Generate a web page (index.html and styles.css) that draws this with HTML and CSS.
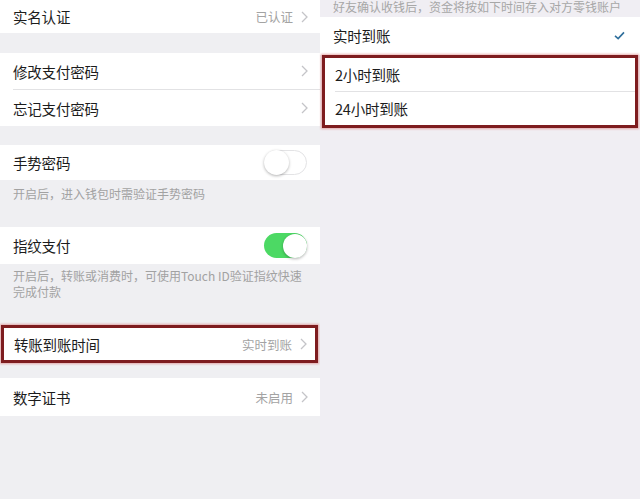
FILE: index.html
```html
<!DOCTYPE html>
<html lang="zh">
<head>
<meta charset="utf-8">
<link rel="stylesheet" href="styles.css">
</head>
<body>
<div class="screen">
  <div class="panel left">
    <div class="row h33">
      <span class="label">实名认证</span>
      <span class="value">已认证<svg class="chev" viewBox="0 0 7 12"><polyline points="1,1 6,6 1,11"/></svg></span>
    </div>
    <div class="gap g20"></div>
    <div class="group">
      <div class="row h36"><span class="label">修改支付密码</span><span class="value"><svg class="chev" viewBox="0 0 7 12"><polyline points="1,1 6,6 1,11"/></svg></span></div>
      <div class="divider"></div>
      <div class="row h36"><span class="label">忘记支付密码</span><span class="value"><svg class="chev" viewBox="0 0 7 12"><polyline points="1,1 6,6 1,11"/></svg></span></div>
    </div>
    <div class="gap g19"></div>
    <div class="row h35">
      <span class="label">手势密码</span>
      <span class="toggle off"><span class="knob"></span></span>
    </div>
    <div class="caption c1">开启后，进入钱包时需验证手势密码</div>
    <div class="row h37">
      <span class="label">指纹支付</span>
      <span class="toggle on"><span class="knob"></span></span>
    </div>
    <div class="caption c2"><div class="cl">开启后，转账或消费时，可使用Touch ID验证指纹快速</div><div class="cl">完成付款</div></div>
    <div class="highlight hl-left">
      <div class="row h32">
        <span class="label">转账到账时间</span>
        <span class="value">实时到账<svg class="chev" viewBox="0 0 7 12"><polyline points="1,1 6,6 1,11"/></svg></span>
      </div>
    </div>
    <div class="gap g15"></div>
    <div class="row h38">
      <span class="label">数字证书</span>
      <span class="value">未启用<svg class="chev" viewBox="0 0 7 12"><polyline points="1,1 6,6 1,11"/></svg></span>
    </div>
  </div>
  <div class="panel right">
    <div class="caption top">好友确认收钱后，资金将按如下时间存入对方零钱账户</div>
    <div class="row r-first">
      <span class="label">实时到账</span>
      <svg class="check" viewBox="0 0 12 10"><polyline points="1,5.5 4.5,8.5 11,1.5"/></svg>
    </div>
    <div class="spacer2"></div>
    <div class="highlight hl-right">
      <div class="row h33r"><span class="label">2小时到账</span></div>
      <div class="divider"></div>
      <div class="row h33r"><span class="label">24小时到账</span></div>
    </div>
  </div>
</div>
</body>
</html>
```
FILE: styles.css
```css
* { box-sizing: border-box; }
html, body { margin: 0; padding: 0; }
body {
  width: 640px;
  height: 499px;
  overflow: hidden;
  font-family: "Noto Sans CJK SC", "Noto Sans", sans-serif;
  background: #efeff3;
}
.screen {
  display: flex;
  width: 640px;
  height: 499px;
}
.panel {
  width: 320px;
  height: 499px;
  display: flex;
  flex-direction: column;
}
.left { background: #efeff2; }
.right { background: #f0eef3; }

.row {
  display: flex;
  align-items: center;
  justify-content: space-between;
  background: #fff;
  padding: 0 13px 0 13px;
  flex: none;
}
.left .row { padding-right: 12px; }
.h32 { height: 32px; }
.h33 { height: 33px; }
.h33r { height: 33px; }
.h35 { height: 35px; }
.h36 { height: 36px; }
.h37 { height: 37px; }
.h38 { height: 38px; }

.label {
  font-size: 14.5px;
  color: #1c1c1c;
  letter-spacing: -0.2px;
}
.value {
  display: flex;
  align-items: center;
  font-size: 12.5px;
  color: #a3a3a3;
}
.chev {
  width: 7px;
  height: 12px;
  margin-left: 8px;
  fill: none;
  stroke: #c4c4c8;
  stroke-width: 1.3;
}
.gap { flex: none; }
.g20 { height: 20px; }
.g19 { height: 19px; }
.g15 { height: 15px; }
.group { background: #fff; }
.divider {
  height: 1px;
  background: #e2e2e4;
  margin-left: 13px;
}
.caption {
  font-size: 12px;
  color: #a2a2a2;
  padding: 5px 13px 0;
  line-height: 17px;
  flex: none;
}
.c1 { height: 47px; }
.c2 { height: 61px; padding-top: 3px; }
.cl { line-height: 17px; height: 16px; }

.toggle {
  width: 43px;
  height: 25px;
  border-radius: 13px;
  position: relative;
  margin-right: 1px;
}
.toggle.off {
  background: #fff;
  border: 1px solid #e3e3e5;
}
.toggle.on { background: #4cd964; }
.knob {
  position: absolute;
  top: 0;
  width: 25px;
  height: 25px;
  border-radius: 50%;
  background: #fff;
  box-shadow: 0 1px 3px rgba(0,0,0,0.3);
}
.off .knob { left: -1px; top: -1px; }
.on .knob { right: 0; width: 24px; height: 24px; top: 0.5px; }

.highlight {
  border: 3px solid #7e1c1f;
  box-shadow: 0 0 2px 1px rgba(210,80,80,0.45);
  background: #fff;
  flex: none;
}
.hl-left {
  margin-left: 1px;
  width: 317px;
  height: 38px;
}
.hl-left .row { padding-left: 10px; padding-right: 8px; }
.hl-right {
  margin-left: 2px;
  width: 316px;
  height: 73px;
}
.hl-right .row { padding-left: 10px; }
.hl-right .divider { margin-left: 10px; }
.right .caption.top {
  height: 17px;
  padding-top: 0;
  line-height: 13px;
  color: #a7a7a7;
}
.r-first { height: 36px; padding-right: 15px; }
.spacer2 { height: 2px; background: #fff; }
.check {
  width: 11px;
  height: 9px;
  fill: none;
  stroke: #2f6f9c;
  stroke-width: 1.8;
}
```
